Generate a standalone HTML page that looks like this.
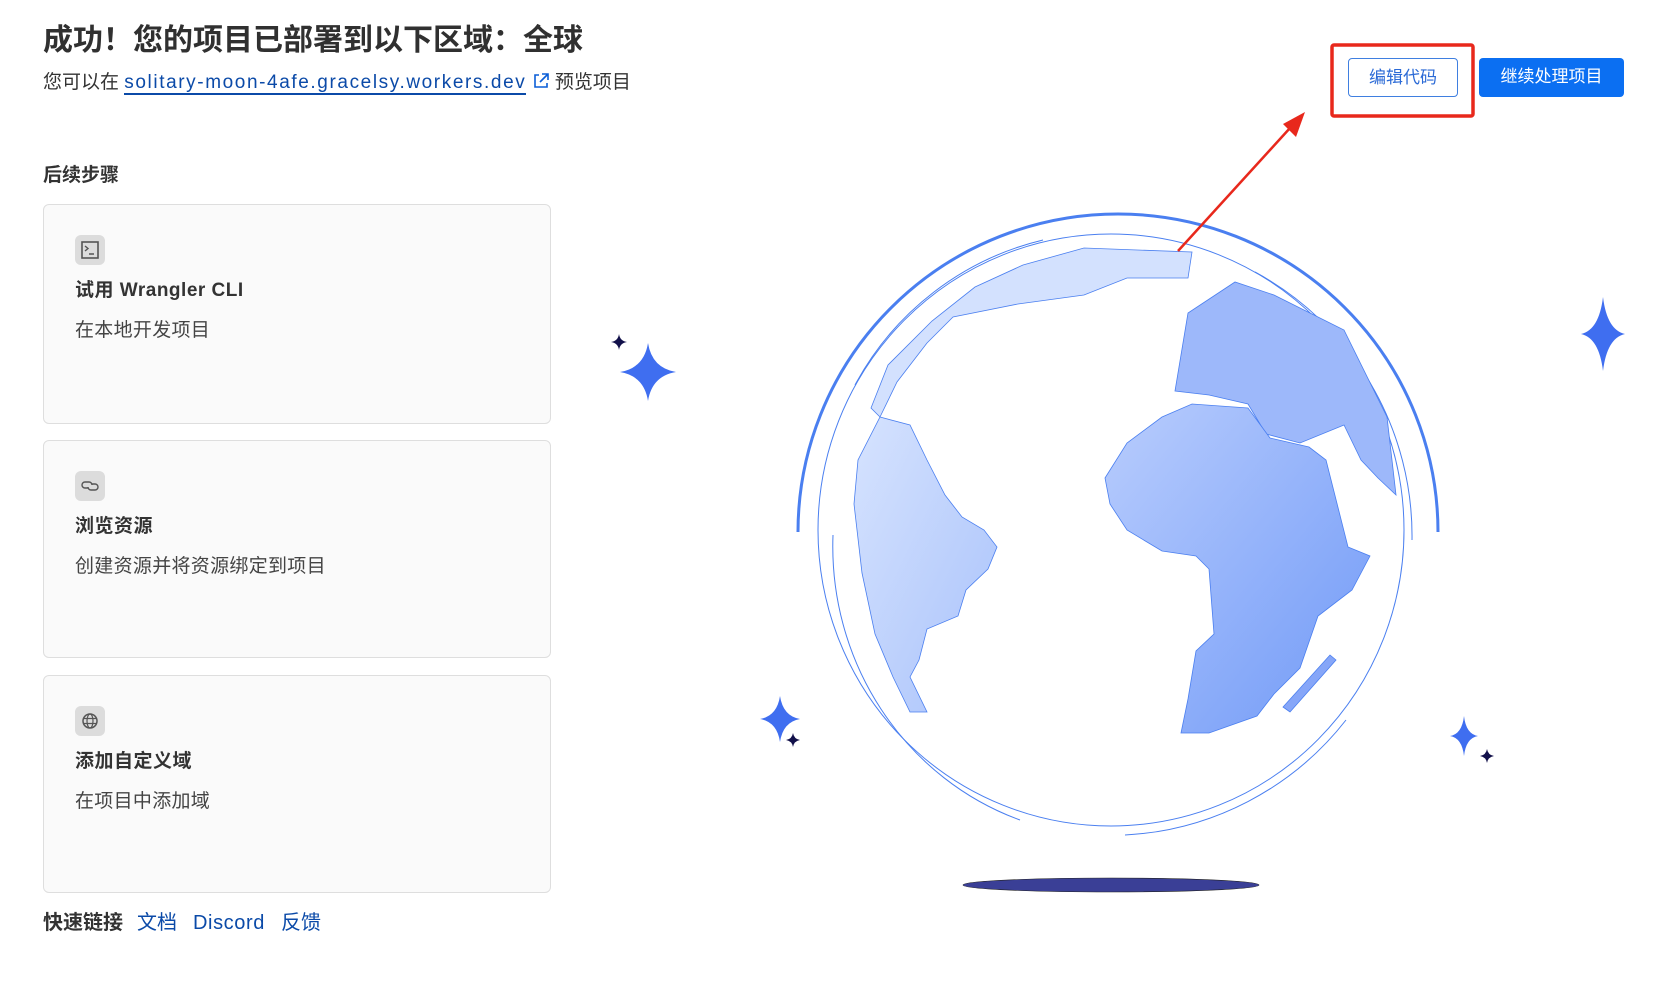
<!DOCTYPE html>
<html><head><meta charset="utf-8">
<style>
*{margin:0;padding:0;box-sizing:border-box}
body{width:1672px;height:1002px;background:#fff;font-family:"Liberation Sans","Noto Sans CJK SC",sans-serif;color:#222;position:relative;overflow:hidden}
.abs{position:absolute;white-space:nowrap}
h1{position:absolute;left:43px;top:21px;font-size:30px;font-weight:700;color:#303030;line-height:40px}
.sub{left:43px;top:69px;font-size:19px;line-height:28px;color:#333}
.sub a{color:#0b4aa8;text-decoration:none;border-bottom:2px solid #0b4aa8;letter-spacing:1.6px}
.h2{left:43px;top:160px;font-size:19px;font-weight:700;color:#333}
.card{position:absolute;left:43px;width:508px;background:#fafafa;border:1px solid #dedede;border-radius:6px}
.ico{position:absolute;left:31px;top:30px;width:30px;height:30px;border-radius:6px;background:#dcdcdc}
.ct{position:absolute;left:31px;top:70px;font-size:19px;font-weight:700;color:#333;white-space:nowrap;letter-spacing:0.5px}
.cd{position:absolute;left:31px;top:110px;font-size:19px;color:#444;white-space:nowrap;letter-spacing:0.3px}
.btn{position:absolute;top:58px;height:39px;border-radius:4px;font-size:17px;line-height:37px;text-align:center}
</style></head><body>
<h1>成功！您的项目已部署到以下区域：全球</h1>
<div class="abs sub">您可以在 <a>solitary-moon-4afe.gracelsy.workers.dev</a> <svg width="18" height="18" viewBox="0 0 18 18" style="vertical-align:-2px"><path d="M7 3H3v12h12v-4M10 2h6v6M16 2L8 10" fill="none" stroke="#0b5ed7" stroke-width="1.6"/></svg> 预览项目</div>
<div class="abs h2">后续步骤</div>

<div class="card" style="top:204px;height:220px">
 <div class="ico"><svg width="30" height="30"><rect x="7" y="7" width="16" height="16" fill="none" stroke="#555" stroke-width="1.6"/><path d="M10 11l3 2.5-3 2.5M14 19h5" fill="none" stroke="#555" stroke-width="1.4"/></svg></div>
 <div class="ct">试用 Wrangler CLI</div><div class="cd">在本地开发项目</div></div>
<div class="card" style="top:440px;height:218px">
 <div class="ico"><svg width="30" height="30"><path d="M13 17h-3a3 3 0 010-6h4a3 3 0 013 3M17 13h3a3 3 0 010 6h-4a3 3 0 01-3-3" fill="none" stroke="#555" stroke-width="1.4"/></svg></div>
 <div class="ct">浏览资源</div><div class="cd">创建资源并将资源绑定到项目</div></div>
<div class="card" style="top:675px;height:218px">
 <div class="ico"><svg width="30" height="30"><circle cx="15" cy="15" r="7" fill="none" stroke="#555" stroke-width="1.5"/><ellipse cx="15" cy="15" rx="3" ry="7" fill="none" stroke="#555" stroke-width="1.2"/><path d="M8 12.5h14M8 17.5h14" stroke="#555" stroke-width="1.2"/></svg></div>
 <div class="ct">添加自定义域</div><div class="cd">在项目中添加域</div></div>

<div class="abs" style="left:43px;top:909px;font-size:20px;line-height:28px"><b style="color:#333">快速链接</b><span style="color:#0b4aa8;margin-left:14px">文档</span><span style="color:#0b4aa8;margin-left:16px;letter-spacing:0.6px">Discord</span><span style="color:#0b4aa8;margin-left:16px">反馈</span></div>

<div class="btn" style="left:1348px;width:110px;border:1px solid #3f7fe0;color:#2b6ad6">编辑代码</div>
<div class="btn" style="left:1479px;width:145px;background:#0b6ff2;color:#fff">继续处理项目</div>

<svg class="abs" style="left:0;top:0" width="1672" height="1002" viewBox="0 0 1672 1002">
<defs>
<linearGradient id="g1" x1="0" y1="0" x2="1" y2="1"><stop offset="0" stop-color="#b9cdfd"/><stop offset="1" stop-color="#7099f7"/></linearGradient>
<linearGradient id="g2" x1="0" y1="0" x2="1" y2="1"><stop offset="0" stop-color="#d6e3fe"/><stop offset="1" stop-color="#a9c2fb"/></linearGradient>
</defs>
<path d="M798 532A320 318 0 0 1 1438 532" fill="none" stroke="#4a7ff0" stroke-width="3"/>
<ellipse cx="1111" cy="530" rx="293" ry="296" fill="none" stroke="#4a7ff0" stroke-width="1"/>
<path d="M833 535A280 290 0 0 0 1020 820" fill="none" stroke="#4a7ff0" stroke-width="1"/>
<path d="M1125 835A300 300 0 0 0 1346 720" fill="none" stroke="#4a7ff0" stroke-width="1"/>
<path d="M855 385A290 290 0 0 1 1043 240" fill="none" stroke="#4a7ff0" stroke-width="1"/>
<path d="M1255 272A300 300 0 0 1 1412 540" fill="none" stroke="#4a7ff0" stroke-width="1"/>
<path d="M1023 265L1084 248L1192 252L1188 278L1127 278L1084 295L1018 304L953 317L927 343L897 382L880 417L871 408L888 365L932 321L975 287Z" fill="#d3e1fe" stroke="#4a7ff0" stroke-width="0.8"/>
<path d="M880 417L910 425L927 460L945 495L962 517L984 530L997 547L988 569L966 590L958 616L927 629L919 660L910 677L927 712L910 712L893 677L875 634L862 573L854 504L858 460Z" fill="url(#g2)" stroke="#4a7ff0" stroke-width="0.8"/>
<path d="M1175 391L1188 313L1235 282L1274 295L1344 330L1387 417L1396 495L1378 478L1361 460L1344 425L1300 443L1266 434L1248 404L1209 395Z" fill="#9db8fa" stroke="#4a7ff0" stroke-width="0.8"/>
<path d="M1105 478L1127 443L1162 417L1192 404L1248 408L1270 438L1309 447L1326 460L1348 547L1370 556L1352 590L1318 616L1300 668L1274 694L1257 716L1209 733L1181 733L1188 699L1196 651L1214 634L1209 569L1196 556L1162 551L1127 530L1110 504Z" fill="url(#g1)" stroke="#4a7ff0" stroke-width="0.8"/>
<path d="M1330 655L1336 660L1290 712L1283 707Z" fill="#86a6f8" stroke="#4a7ff0" stroke-width="0.8"/>
<ellipse cx="1111" cy="885" rx="148" ry="7" fill="#3a3f96" stroke="#222" stroke-width="0.6"/>
<path d="M1178 251L1290 128" stroke="#e8281c" stroke-width="2.5"/>
<path d="M1305 112L1296 137L1283 124Z" fill="#e8281c"/>
<rect x="1332" y="45" width="141" height="71" rx="2" fill="none" stroke="#e8281c" stroke-width="3.5"/>
<g fill="#3f6ef0">
<path d="M648 343Q652 368 676 372Q652 376 648 401Q644 376 620 372Q644 368 648 343Z"/>
<path d="M1603 297Q1607 330 1625 334Q1607 338 1603 371Q1599 338 1581 334Q1599 330 1603 297Z"/>
<path d="M780 696Q783 716 800 719Q783 722 780 742Q777 722 760 719Q777 716 780 696Z"/>
<path d="M1464 716Q1466 734 1478 736Q1466 738 1464 756Q1462 738 1450 736Q1462 734 1464 716Z"/>
</g>
<g fill="#12104a">
<path d="M619 334Q620 341 627 342Q620 343 619 350Q618 343 611 342Q618 341 619 334Z"/>
<path d="M793 733Q794 739 800 740Q794 741 793 747Q792 741 786 740Q792 739 793 733Z"/>
<path d="M1487 749Q1488 755 1494 756Q1488 757 1487 763Q1486 757 1480 756Q1486 755 1487 749Z"/>
</g>
</svg>
</body></html>
